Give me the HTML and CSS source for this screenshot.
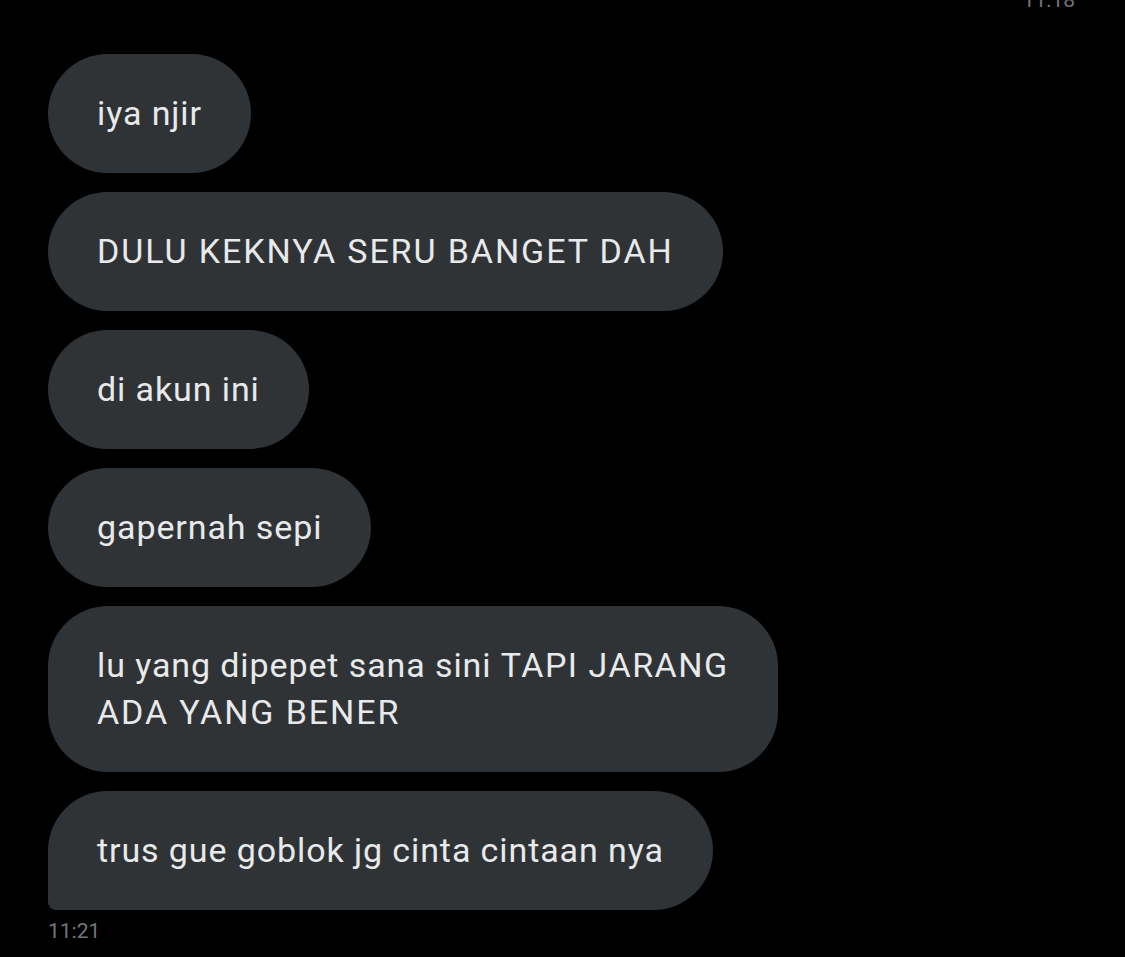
FILE: index.html
```html
<!DOCTYPE html>
<html lang="id">
<head>
<meta charset="utf-8">
<title>DM</title>
<link rel="stylesheet" href="styles.css">
</head>
<body>
<main class="chat">
  <div class="stamp stamp-top">11:18</div>
  <div class="messages">
    <div class="bubble">iya njir</div>
    <div class="bubble"><span class="caps">DULU KEKNYA SERU BANGET DAH</span></div>
    <div class="bubble">di akun ini</div>
    <div class="bubble">gapernah sepi</div>
    <div class="bubble">lu yang dipepet sana sini <span class="caps caps-tight">TAPI JARANG</span><br><span class="caps">ADA YANG BENER</span></div>
    <div class="bubble bubble-last">trus gue goblok jg cinta cintaan nya</div>
  </div>
  <div class="stamp stamp-bottom">11:21</div>
</main>
</body>
</html>
```
FILE: styles.css
```css
html, body {
  margin: 0;
  padding: 0;
  background: #000;
}
body {
  width: 1125px;
  height: 957px;
  overflow: hidden;
  font-family: Roboto, "Noto Sans", sans-serif;
}
.chat {
  display: flex;
  flex-direction: column;
  padding: 0 50px 0 48px;
}
.stamp {
  color: #71767b;
  font-size: 21px;
  line-height: 26px;
}
.stamp-top {
  text-align: right;
  margin-top: -13px;
}
.messages {
  display: flex;
  flex-direction: column;
  align-items: flex-start;
  gap: 19px;
  margin-top: 41px;
}
.bubble {
  background: #2f3336;
  color: #e7e9ea;
  font-size: 34px;
  line-height: 47px;
  letter-spacing: 0.9px;
  padding: 36px 49px;
  border-radius: 60px;
}
.caps {
  letter-spacing: 1.9px;
}
.caps-tight {
  letter-spacing: 1.5px;
}
.bubble-last {
  border-bottom-left-radius: 8px;
}
.stamp-bottom {
  margin-top: 8px;
}
```
